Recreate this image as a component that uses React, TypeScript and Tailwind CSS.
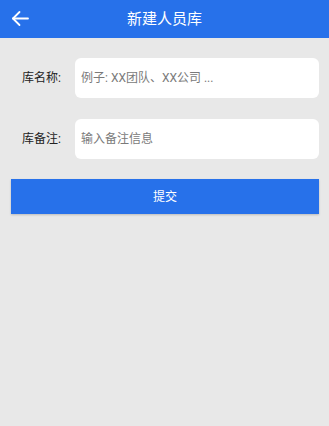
import React, { useState } from 'react';

const FONT = { fontFamily: 'Roboto, "Noto Sans CJK SC", sans-serif' };

function Field({ label, placeholder, value, onChange }: { label: string; placeholder: string; value: string; onChange: (v: string) => void }) {
  return (
    <div className="flex items-center">
      <div className="w-[75px] shrink-0 pl-[22px] text-[12px] font-normal text-[#222]">{label}</div>
      <input
        value={value}
        onChange={(e) => onChange(e.target.value)}
        placeholder={placeholder}
        className="flex-1 min-w-0 h-10 mr-[10px] rounded-md bg-white px-[6px] text-[12px] text-[#333] placeholder:text-[#7a7a7a] outline-none"
      />
    </div>
  );
}

export default function App() {
  const [name, setName] = useState('');
  const [note, setNote] = useState('');

  return (
    <div className="min-h-[426px] bg-[#e8e8e8]" style={FONT}>
      <header className="relative h-[38px] bg-[#2771ea] flex items-center justify-center">
        <button aria-label="返回" className="absolute left-[11px] top-[10px] text-white">
          <svg width="19" height="17" viewBox="0 0 19 17" fill="none" stroke="currentColor" strokeWidth="1.8" strokeLinecap="round" strokeLinejoin="round">
            <path d="M17 8.5H2" />
            <path d="M8.5 2L2 8.5L8.5 15" />
          </svg>
        </button>
        <h1 className="text-white text-[15px] font-normal">新建人员库</h1>
      </header>

      <div className="pt-5 flex flex-col gap-[21px]">
        <Field label="库名称:" placeholder="例子: XX团队、XX公司 ..." value={name} onChange={setName} />
        <Field label="库备注:" placeholder="输入备注信息" value={note} onChange={setNote} />
      </div>

      <div className="pt-5 pl-[11px] pr-[10px]">
        <button className="w-full h-[35px] bg-[#2771ea] text-white text-[12px] shadow-[0_1px_2px_rgba(0,0,0,0.2)]">提交</button>
      </div>
    </div>
  );
}
